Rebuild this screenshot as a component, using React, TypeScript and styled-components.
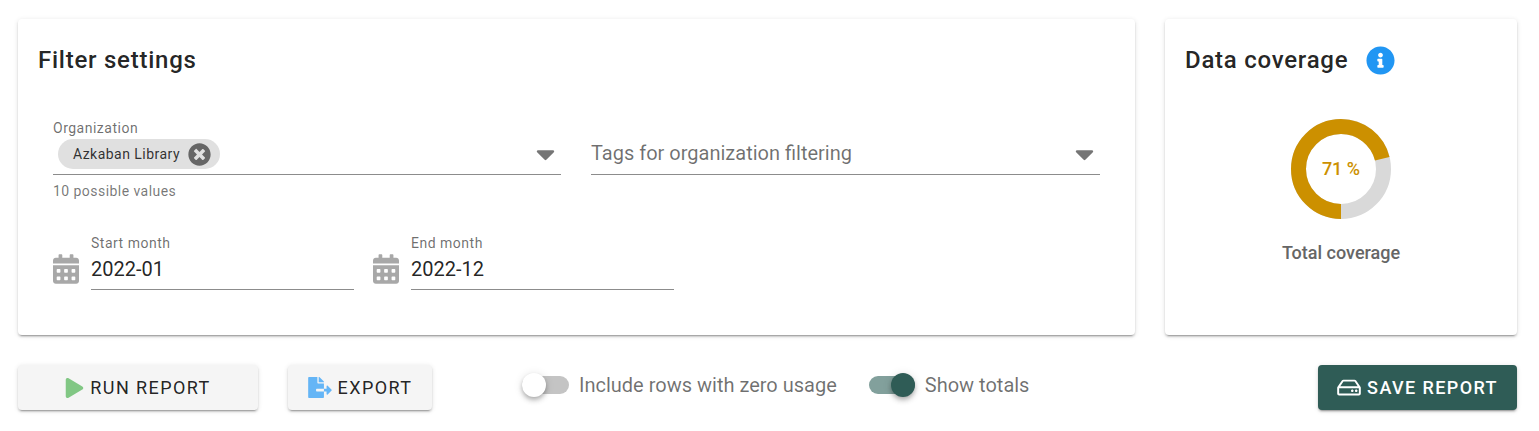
import React from "react";
import styled, { createGlobalStyle } from "styled-components";
import {
  FaCalendarAlt,
  FaCaretDown,
  FaFileExport,
  FaInfoCircle,
  FaPlay,
  FaRegHdd,
  FaTimesCircle,
} from "react-icons/fa";

const GlobalStyle = createGlobalStyle`
  html, body {
    margin: 0;
    padding: 0;
    background: #fff;
    font-family: Roboto, "Liberation Sans", sans-serif;
    color: rgba(0, 0, 0, 0.87);
  }
`;

const Page = styled.div`
  width: 1539px;
  height: 431px;
  box-sizing: border-box;
  padding: 19px 22px 0 18px;
  overflow: hidden;
`;

const TopRow = styled.div`
  display: flex;
  gap: 30px;
`;

const Card = styled.section<{ $width: number }>`
  width: ${({ $width }) => $width}px;
  height: 316px;
  box-sizing: border-box;
  background: #fff;
  border-radius: 4px;
  padding: 26px 20px 0;
  box-shadow: 0 3px 1px -2px rgba(0, 0, 0, 0.2), 0 2px 2px 0 rgba(0, 0, 0, 0.14),
    0 1px 5px 0 rgba(0, 0, 0, 0.12);
`;

const Title = styled.h2`
  margin: 0;
  display: flex;
  align-items: center;
  height: 30px;
  font-size: 24px;
  line-height: 30px;
  font-weight: 500;
  letter-spacing: 0.75px;
  color: rgba(0, 0, 0, 0.87);
`;

const InfoIcon = styled(FaInfoCircle)`
  margin-left: 17.5px;
  width: 29px;
  height: 29px;
  color: #2196f3;
`;

const Fields = styled.div`
  padding: 45px 15px 0;
`;

const SelectRow = styled.div`
  display: flex;
  gap: 30px;
`;

const SelectField = styled.div<{ $width?: number; $unlabelled?: boolean }>`
  flex: ${({ $width }) => ($width ? `0 0 ${$width}px` : 1)};
  padding-top: ${({ $unlabelled }) => ($unlabelled ? "16px" : 0)};
`;

const SelectControl = styled.div`
  position: relative;
  display: flex;
  align-items: flex-start;
  height: 39px;
  box-sizing: border-box;
  padding-top: 3px;
  border-bottom: 1px solid #8c8c8c;
`;

const SmallLabel = styled.div`
  font-size: 14px;
  line-height: 16px;
  letter-spacing: 0.5px;
  color: rgba(0, 0, 0, 0.58);
`;

const Chip = styled.span`
  display: inline-flex;
  align-items: center;
  height: 30px;
  box-sizing: border-box;
  margin-left: 5px;
  padding: 0 9px 0 15px;
  border-radius: 15px;
  background: #e0e0e0;
  font-size: 14px;
  letter-spacing: 0.47px;
  color: rgba(0, 0, 0, 0.8);
`;

const ChipClose = styled(FaTimesCircle)`
  width: 23px;
  height: 23px;
  margin-left: 8px;
  color: #666;
`;

const Caret = styled(FaCaretDown)`
  position: absolute;
  right: 4px;
  bottom: 5px;
  width: 23px;
  height: 30px;
  color: #757575;
`;

const Placeholder = styled.div`
  padding-top: 2px;
  font-size: 20px;
  line-height: 24px;
  color: rgba(0, 0, 0, 0.56);
`;

const Hint = styled.div`
  margin-top: 8px;
  font-size: 14px;
  line-height: 16px;
  letter-spacing: 0.45px;
  color: rgba(0, 0, 0, 0.55);
`;

const DateRow = styled.div`
  display: flex;
  gap: 19px;
  margin-top: 36px;
`;

const DateField = styled.div`
  display: flex;
  align-items: flex-end;
  gap: 12px;
`;

const CalendarIcon = styled(FaCalendarAlt)`
  width: 26px;
  height: 30px;
  margin-bottom: 6px;
  color: #a8a8a8;
`;

const DateInput = styled.div`
  width: 263px;
  box-sizing: border-box;
  border-bottom: 1px solid #8c8c8c;
  height: 55px;
`;

const DateValue = styled.div`
  margin-top: 4px;
  font-size: 20px;
  line-height: 28px;
  color: rgba(0, 0, 0, 0.87);
`;

const CoverageBody = styled.div`
  display: flex;
  flex-direction: column;
  align-items: center;
  padding-top: 44px;
`;

const Donut = styled.div`
  position: relative;
  width: 100px;
  height: 100px;
`;

const DonutLabel = styled.div`
  position: absolute;
  inset: 0 0 2px;
  display: flex;
  align-items: center;
  justify-content: center;
  font-size: 18px;
  font-weight: 500;
  color: #cc9000;
`;

const DonutCaption = styled.div`
  margin-top: 24px;
  font-size: 18px;
  line-height: 20px;
  font-weight: 500;
  color: #666;
`;

const BottomRow = styled.div`
  display: flex;
  align-items: center;
  gap: 30px;
  height: 45px;
  margin-top: 30px;
`;

const Button = styled.button<{ $width: number; $primary?: boolean }>`
  display: inline-flex;
  align-items: center;
  justify-content: center;
  gap: 6px;
  width: ${({ $width }) => $width}px;
  height: 45px;
  flex: none;
  padding: 0;
  border: 0;
  border-radius: 4px;
  font-family: inherit;
  font-size: 18px;
  font-weight: ${({ $primary }) => ($primary ? 500 : 400)};
  letter-spacing: 1.4px;
  color: ${({ $primary }) => ($primary ? "#fff" : "rgba(0, 0, 0, 0.87)")};
  background: ${({ $primary }) => ($primary ? "#2f5c56" : "#f5f5f5")};
  box-shadow: 0 3px 1px -2px rgba(0, 0, 0, 0.2), 0 2px 2px 0 rgba(0, 0, 0, 0.14),
    0 1px 5px 0 rgba(0, 0, 0, 0.12);
`;

const PlayIcon = styled(FaPlay)`
  width: 19px;
  height: 20px;
  color: #81c784;
`;

const ExportIcon = styled(FaFileExport)`
  width: 24px;
  height: 21px;
  color: #64b5f6;
`;

const SaveIcon = styled(FaRegHdd)`
  width: 24px;
  height: 21px;
  color: #fff;
`;

const SwitchGroup = styled.div`
  display: flex;
  align-items: center;
  gap: 32px;
  flex: 1;
  margin-left: 60px;
  padding-bottom: 5px;
`;

const SwitchItem = styled.label`
  display: flex;
  align-items: center;
  gap: 10px;
  font-size: 20px;
  color: rgba(0, 0, 0, 0.56);
`;

const SwitchTrack = styled.span<{ $on?: boolean }>`
  position: relative;
  display: block;
  width: ${({ $on }) => ($on ? 46 : 47)}px;
  height: 18px;
  border-radius: 9px;
  background: ${({ $on }) => ($on ? "#82a09c" : "#c4c4c4")};
`;

const SwitchThumb = styled.span<{ $on?: boolean }>`
  position: absolute;
  top: -3px;
  left: ${({ $on }) => ($on ? "22px" : "0")};
  width: 24px;
  height: 24px;
  border-radius: 50%;
  background: ${({ $on }) => ($on ? "#2f5c56" : "#fff")};
  box-shadow: 0 2px 4px -1px rgba(0, 0, 0, 0.2), 0 4px 5px 0 rgba(0, 0, 0, 0.14),
    0 1px 10px 0 rgba(0, 0, 0, 0.12);
`;

const coverage = 71;
const radius = 42.5;
const circumference = 2 * Math.PI * radius;

const App: React.FC = () => {
  return (
    <Page>
      <GlobalStyle />
      <TopRow>
        <Card $width={1117}>
          <Title>Filter settings</Title>
          <Fields>
            <SelectRow>
              <SelectField $width={508}>
                <SmallLabel>Organization</SmallLabel>
                <SelectControl>
                  <Chip>
                    Azkaban Library
                    <ChipClose />
                  </Chip>
                  <Caret />
                </SelectControl>
                <Hint>10 possible values</Hint>
              </SelectField>
              <SelectField $unlabelled>
                <SelectControl>
                  <Placeholder>Tags for organization filtering</Placeholder>
                  <Caret />
                </SelectControl>
              </SelectField>
            </SelectRow>
            <DateRow>
              <DateField>
                <CalendarIcon />
                <DateInput>
                  <SmallLabel>Start month</SmallLabel>
                  <DateValue>2022-01</DateValue>
                </DateInput>
              </DateField>
              <DateField>
                <CalendarIcon />
                <DateInput>
                  <SmallLabel>End month</SmallLabel>
                  <DateValue>2022-12</DateValue>
                </DateInput>
              </DateField>
            </DateRow>
          </Fields>
        </Card>
        <Card $width={352}>
          <Title>
            Data coverage
            <InfoIcon />
          </Title>
          <CoverageBody>
            <Donut>
              <svg width="100" height="100" viewBox="0 0 100 100">
                <circle cx="50" cy="50" r={radius} fill="none" stroke="#d9d9d9" strokeWidth="15" />
                <circle
                  cx="50"
                  cy="50"
                  r={radius}
                  fill="none"
                  stroke="#cc9000"
                  strokeWidth="15"
                  strokeDasharray={`${(circumference * coverage) / 100} ${circumference}`}
                  transform="rotate(90 50 50)"
                />
              </svg>
              <DonutLabel>{coverage} %</DonutLabel>
            </Donut>
            <DonutCaption>Total coverage</DonutCaption>
          </CoverageBody>
        </Card>
      </TopRow>
      <BottomRow>
        <Button $width={240}>
          <PlayIcon />
          RUN REPORT
        </Button>
        <Button $width={144}>
          <ExportIcon />
          EXPORT
        </Button>
        <SwitchGroup>
          <SwitchItem>
            <SwitchTrack>
              <SwitchThumb />
            </SwitchTrack>
            Include rows with zero usage
          </SwitchItem>
          <SwitchItem>
            <SwitchTrack $on>
              <SwitchThumb $on />
            </SwitchTrack>
            Show totals
          </SwitchItem>
        </SwitchGroup>
        <Button $width={199} $primary>
          <SaveIcon />
          SAVE REPORT
        </Button>
      </BottomRow>
    </Page>
  );
};

export default App;
